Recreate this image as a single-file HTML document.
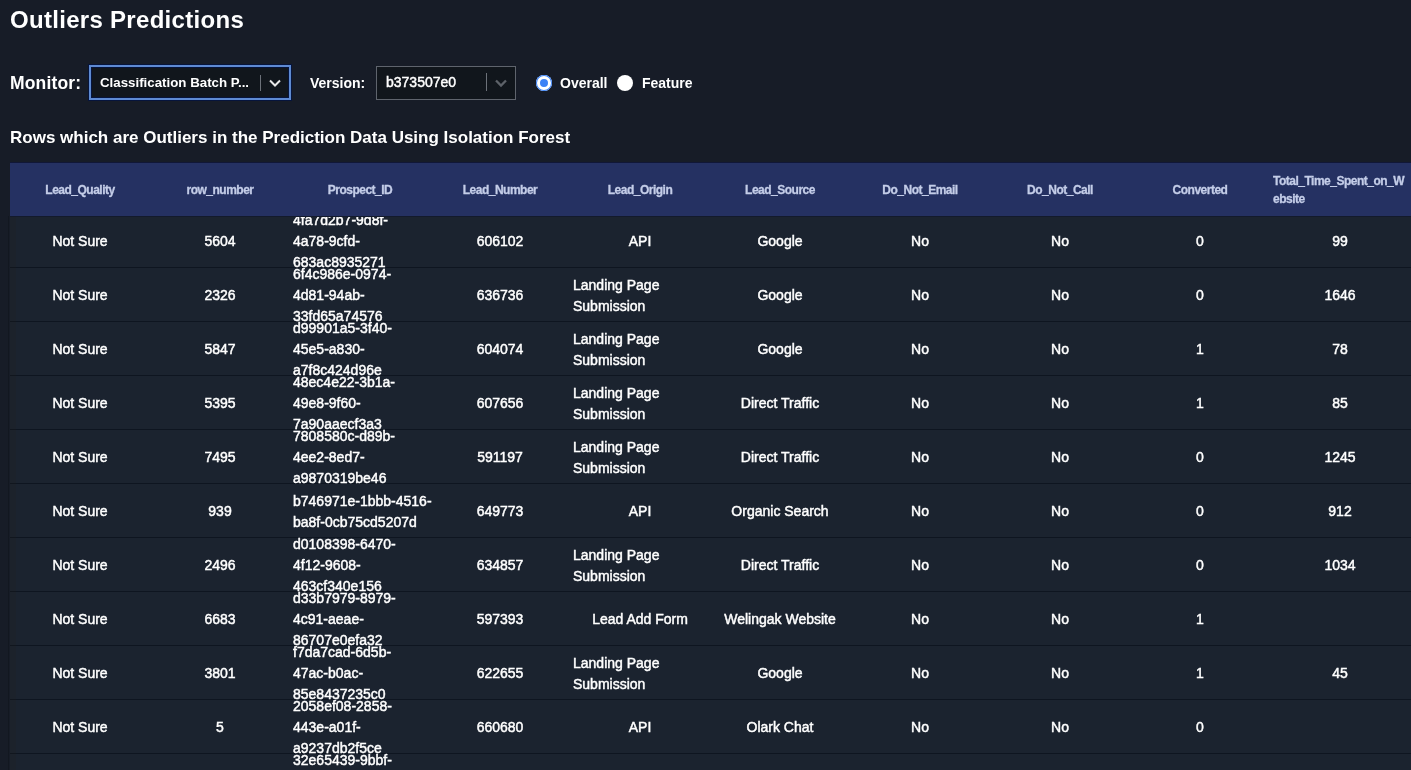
<!DOCTYPE html>
<html><head><meta charset="utf-8">
<style>
*{margin:0;padding:0;box-sizing:border-box}
html,body{width:1411px;height:770px;overflow:hidden;background:#171c27;font-family:"Liberation Sans",sans-serif;color:#fff}
.abs{position:absolute}
#title{left:10px;top:5px;font-size:24px;font-weight:bold;line-height:30px;letter-spacing:0.3px;white-space:nowrap;color:#fff}
.lbl{font-size:17px;font-weight:bold;line-height:20px;white-space:nowrap;color:#fff}
.sel{position:absolute;background:#11161c}
.sel .txt{position:absolute;font-size:14px;line-height:18px;white-space:nowrap;color:#fff}
.sep{position:absolute;width:1px;background:#6c7179}
.chev{position:absolute}
.radio{position:absolute;width:16px;height:16px;border-radius:50%}
#sub{left:10px;top:127px;font-size:17px;font-weight:bold;line-height:22px;white-space:nowrap}
#tbl{position:absolute;left:10px;top:162px;width:1540px;height:608px;overflow:hidden}
#hd{position:absolute;left:0;top:0;height:55px;width:1540px;background:#253162;z-index:2;border-top:1px solid #111737;border-bottom:1px solid #131a2c}
#hd .c{height:53px;font-size:12px;letter-spacing:-0.5px;padding-top:1px;font-weight:bold;line-height:18px;color:#c4cde8;-webkit-text-stroke:0.3px #c4cde8}
#bd{position:absolute;left:0;top:0;width:1540px;height:608px;overflow:hidden}
.r{position:absolute;left:0;height:54px;width:1540px;background:#1b232f;border-bottom:1px solid #0e1520}
.c{float:left;width:140px;height:53px;display:flex;align-items:center;justify-content:center;padding:0 3px;overflow:visible}
.c span{display:block;white-space:nowrap;text-align:left}
.c span.m{width:100%}
.r .c{font-size:14px;line-height:21px;color:#fff;padding-top:2px;-webkit-text-stroke:0.45px #fff}
</style></head><body><div id="wrap" style="position:absolute;left:0;top:0;width:1411px;height:770px;will-change:transform">
<div id="title" class="abs">Outliers Predictions</div>
<div class="abs lbl" style="left:10px;top:73px;font-size:17.5px;letter-spacing:0.15px">Monitor:</div>
<div class="sel" style="left:89px;top:65px;width:202px;height:35px;border:2px solid #5e8ad2;box-shadow:0 0 0 1px #06143c, inset 0 0 0 1px #06143c">
  <div class="txt" style="left:9px;top:7px;font-weight:bold;font-size:13.3px">Classification Batch P...</div>
  <div class="sep" style="left:169px;top:8px;height:16px"></div>
  <svg class="chev" style="left:177px;top:10px" width="14" height="12" viewBox="0 0 14 12"><path d="M2 3.5 L7 8.5 L12 3.5" fill="none" stroke="#e8e8e8" stroke-width="2"/></svg>
</div>
<div class="abs lbl" style="left:310px;top:73px;font-size:14px">Version:</div>
<div class="sel" style="left:376px;top:66px;width:140px;height:34px;border:1px solid #5f646d">
  <div class="txt" style="left:9px;top:6px;-webkit-text-stroke:0.45px #fff">b373507e0</div>
  <div class="sep" style="left:109px;top:6px;height:18px"></div>
  <svg class="chev" style="left:117px;top:10px" width="14" height="12" viewBox="0 0 14 12"><path d="M2 3.5 L7 8.5 L12 3.5" fill="none" stroke="#5d6269" stroke-width="2.3"/></svg>
</div>
<div class="radio" style="left:536px;top:75px;background:#3b82f6;box-shadow:inset 0 0 0 1px #3b82f6, inset 0 0 0 4px #fff"></div>
<div class="abs lbl" style="left:560px;top:73px;font-size:14px">Overall</div>
<div class="radio" style="left:617px;top:75px;background:#fff"></div>
<div class="abs lbl" style="left:642px;top:73px;font-size:14px">Feature</div>
<div id="sub" class="abs">Rows which are Outliers in the Prediction Data Using Isolation Forest</div>
<div style="position:absolute;left:8px;top:216px;width:1px;height:560px;background:#121720"></div>
<div id="tbl">
  <div id="hd"><div class="c"><span>Lead_Quality</span></div><div class="c"><span>row_number</span></div><div class="c"><span>Prospect_ID</span></div><div class="c"><span>Lead_Number</span></div><div class="c"><span>Lead_Origin</span></div><div class="c"><span>Lead_Source</span></div><div class="c"><span>Do_Not_Email</span></div><div class="c"><span>Do_Not_Call</span></div><div class="c"><span>Converted</span></div><div class="c"><span class="m">Total_Time_Spent_on_W<br>ebsite</span></div><div class="c"><span>Total_Visits</span></div></div>
  <div style="position:absolute;left:0;top:55px;width:6px;height:560px;background:rgba(38,32,22,0.15);z-index:1"></div>
  <div id="bd">
<div class="r" style="top:52px"><div class="c"><span>Not Sure</span></div><div class="c"><span>5604</span></div><div class="c"><span class="m">4fa7d2b7-9d8f-<br>4a78-9cfd-<br>683ac8935271</span></div><div class="c"><span>606102</span></div><div class="c"><span>API</span></div><div class="c"><span>Google</span></div><div class="c"><span>No</span></div><div class="c"><span>No</span></div><div class="c"><span>0</span></div><div class="c"><span>99</span></div></div>
<div class="r" style="top:106px"><div class="c"><span>Not Sure</span></div><div class="c"><span>2326</span></div><div class="c"><span class="m">6f4c986e-0974-<br>4d81-94ab-<br>33fd65a74576</span></div><div class="c"><span>636736</span></div><div class="c"><span class="m">Landing Page<br>Submission</span></div><div class="c"><span>Google</span></div><div class="c"><span>No</span></div><div class="c"><span>No</span></div><div class="c"><span>0</span></div><div class="c"><span>1646</span></div></div>
<div class="r" style="top:160px"><div class="c"><span>Not Sure</span></div><div class="c"><span>5847</span></div><div class="c"><span class="m">d99901a5-3f40-<br>45e5-a830-<br>a7f8c424d96e</span></div><div class="c"><span>604074</span></div><div class="c"><span class="m">Landing Page<br>Submission</span></div><div class="c"><span>Google</span></div><div class="c"><span>No</span></div><div class="c"><span>No</span></div><div class="c"><span>1</span></div><div class="c"><span>78</span></div></div>
<div class="r" style="top:214px"><div class="c"><span>Not Sure</span></div><div class="c"><span>5395</span></div><div class="c"><span class="m">48ec4e22-3b1a-<br>49e8-9f60-<br>7a90aaecf3a3</span></div><div class="c"><span>607656</span></div><div class="c"><span class="m">Landing Page<br>Submission</span></div><div class="c"><span>Direct Traffic</span></div><div class="c"><span>No</span></div><div class="c"><span>No</span></div><div class="c"><span>1</span></div><div class="c"><span>85</span></div></div>
<div class="r" style="top:268px"><div class="c"><span>Not Sure</span></div><div class="c"><span>7495</span></div><div class="c"><span class="m">7808580c-d89b-<br>4ee2-8ed7-<br>a9870319be46</span></div><div class="c"><span>591197</span></div><div class="c"><span class="m">Landing Page<br>Submission</span></div><div class="c"><span>Direct Traffic</span></div><div class="c"><span>No</span></div><div class="c"><span>No</span></div><div class="c"><span>0</span></div><div class="c"><span>1245</span></div></div>
<div class="r" style="top:322px"><div class="c"><span>Not Sure</span></div><div class="c"><span>939</span></div><div class="c"><span class="m">b746971e-1bbb-4516-<br>ba8f-0cb75cd5207d</span></div><div class="c"><span>649773</span></div><div class="c"><span>API</span></div><div class="c"><span>Organic Search</span></div><div class="c"><span>No</span></div><div class="c"><span>No</span></div><div class="c"><span>0</span></div><div class="c"><span>912</span></div></div>
<div class="r" style="top:376px"><div class="c"><span>Not Sure</span></div><div class="c"><span>2496</span></div><div class="c"><span class="m">d0108398-6470-<br>4f12-9608-<br>463cf340e156</span></div><div class="c"><span>634857</span></div><div class="c"><span class="m">Landing Page<br>Submission</span></div><div class="c"><span>Direct Traffic</span></div><div class="c"><span>No</span></div><div class="c"><span>No</span></div><div class="c"><span>0</span></div><div class="c"><span>1034</span></div></div>
<div class="r" style="top:430px"><div class="c"><span>Not Sure</span></div><div class="c"><span>6683</span></div><div class="c"><span class="m">d33b7979-8979-<br>4c91-aeae-<br>86707e0efa32</span></div><div class="c"><span>597393</span></div><div class="c"><span>Lead Add Form</span></div><div class="c"><span>Welingak Website</span></div><div class="c"><span>No</span></div><div class="c"><span>No</span></div><div class="c"><span>1</span></div><div class="c"><span></span></div></div>
<div class="r" style="top:484px"><div class="c"><span>Not Sure</span></div><div class="c"><span>3801</span></div><div class="c"><span class="m">f7da7cad-6d5b-<br>47ac-b0ac-<br>85e8437235c0</span></div><div class="c"><span>622655</span></div><div class="c"><span class="m">Landing Page<br>Submission</span></div><div class="c"><span>Google</span></div><div class="c"><span>No</span></div><div class="c"><span>No</span></div><div class="c"><span>1</span></div><div class="c"><span>45</span></div></div>
<div class="r" style="top:538px"><div class="c"><span>Not Sure</span></div><div class="c"><span>5</span></div><div class="c"><span class="m">2058ef08-2858-<br>443e-a01f-<br>a9237db2f5ce</span></div><div class="c"><span>660680</span></div><div class="c"><span>API</span></div><div class="c"><span>Olark Chat</span></div><div class="c"><span>No</span></div><div class="c"><span>No</span></div><div class="c"><span>0</span></div><div class="c"><span></span></div></div>
<div class="r" style="top:592px"><div class="c"><span>Not Sure</span></div><div class="c"><span>8210</span></div><div class="c"><span class="m">32e65439-9bbf-<br>4d2a-8c11-<br>5b0e6f3d9a27</span></div><div class="c"><span>612345</span></div><div class="c"><span>API</span></div><div class="c"><span>Google</span></div><div class="c"><span>No</span></div><div class="c"><span>No</span></div><div class="c"><span>0</span></div><div class="c"><span>120</span></div></div>
  </div>
</div>
</div></body></html>
